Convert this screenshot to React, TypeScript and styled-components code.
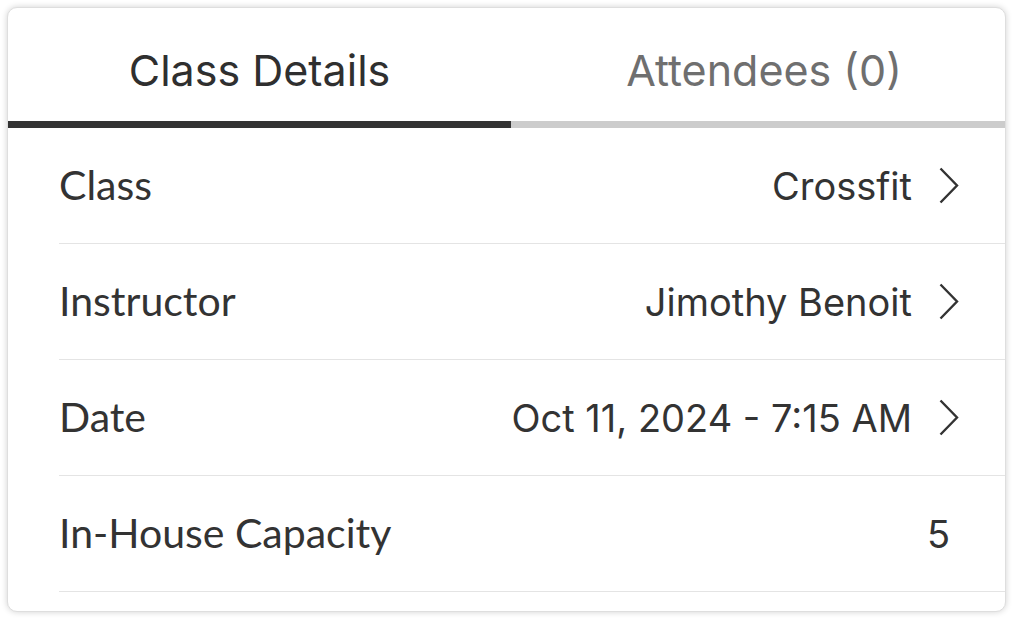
import React from 'react';
import styled, { createGlobalStyle } from 'styled-components';

const GlobalStyle = createGlobalStyle`
  html, body {
    margin: 0;
    padding: 0;
    background: #ffffff;
  }
  body {
    font-family: Inter, Roboto, "Liberation Sans", sans-serif;
    color: #333333;
  }
`;

const Page = styled.div`
  padding: 7px 8px 7px 7px;
`;

const Card = styled.div`
  width: 999px;
  height: 605px;
  box-sizing: border-box;
  background: #fff;
  border: 1px solid #dedede;
  border-radius: 10px;
  box-shadow: 0 0 6px rgba(0, 0, 0, 0.18);
  overflow: hidden;
  display: flex;
  flex-direction: column;
`;

const Tabs = styled.div`
  display: flex;
`;

const Tab = styled.div<{ active?: boolean }>`
  flex: ${p => (p.active ? '0 0 503px' : '1')};
  height: 120px;
  box-sizing: border-box;
  padding-top: 11px;
  padding-left: ${p => (p.active ? '0' : '12px')};
  display: flex;
  align-items: center;
  justify-content: center;
  font-size: 43px;
  color: ${p => (p.active ? '#2f2f2f' : '#6f6f6f')};
  border-bottom: 7px solid ${p => (p.active ? '#333333' : '#cccccc')};
`;

const List = styled.div`
  display: flex;
  flex-direction: column;
`;

const Row = styled.div`
  height: 115px;
  margin-left: 51px;
  padding-right: 46px;
  display: flex;
  align-items: center;
  justify-content: space-between;
  border-bottom: 1.5px solid #e4e4e4;
`;

const Label = styled.span`
  font-family: Lato, "Open Sans", sans-serif;
  font-size: 41px;
  color: #333;
  padding-bottom: 2px;
`;

const Value = styled.div<{ plain?: boolean }>`
  display: flex;
  align-items: center;
  gap: 27px;
  font-size: 38px;
  color: #333;
  margin-right: ${p => (p.plain ? '9px' : '0')};
`;

const Chevron = () => (
  <svg width="20" height="37" viewBox="0 0 20 37">
    <polyline
      points="1.5,1.5 18,18.5 1.5,35.5"
      fill="none"
      stroke="#333"
      strokeWidth="2.4"
    />
  </svg>
);

const rows = [
  { label: 'Class', value: 'Crossfit', link: true },
  { label: 'Instructor', value: 'Jimothy Benoit', link: true },
  { label: 'Date', value: 'Oct 11, 2024 - 7:15 AM', link: true },
  { label: 'In-House Capacity', value: '5', link: false },
];

export default function App() {
  return (
    <Page>
      <GlobalStyle />
      <Card>
        <Tabs>
          <Tab active>Class Details</Tab>
          <Tab>Attendees (0)</Tab>
        </Tabs>
        <List>
          {rows.map(r => (
            <Row key={r.label}>
              <Label>{r.label}</Label>
              <Value plain={!r.link}>
                {r.value}
                {r.link && <Chevron />}
              </Value>
            </Row>
          ))}
        </List>
      </Card>
    </Page>
  );
}
